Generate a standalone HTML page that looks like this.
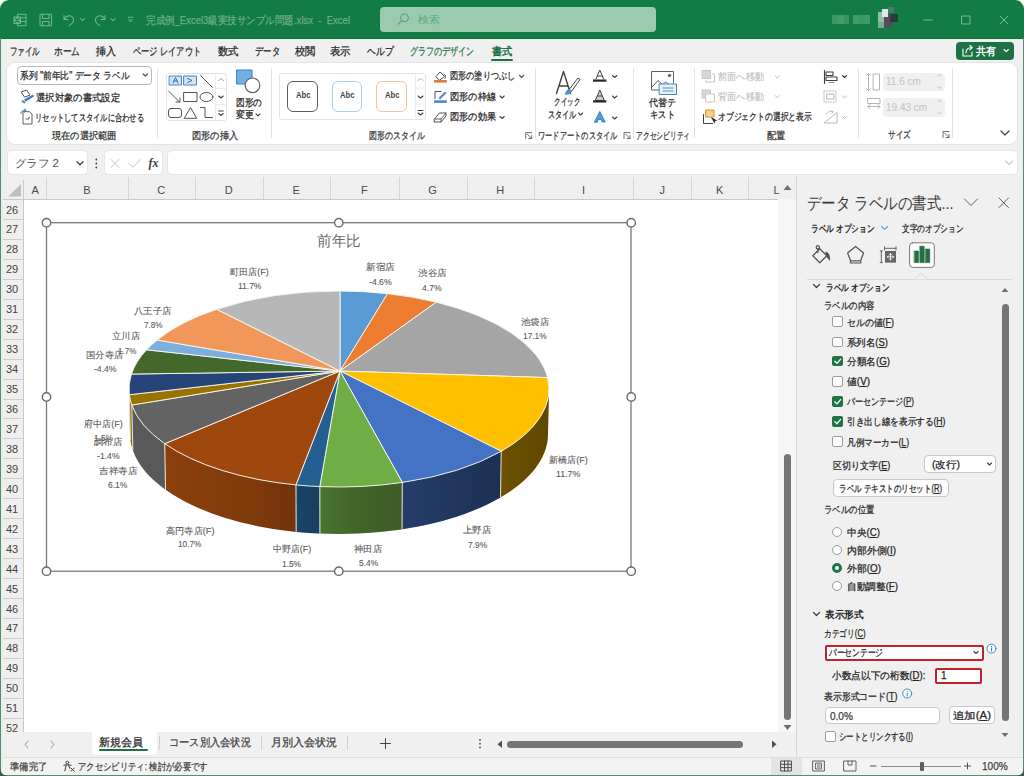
<!DOCTYPE html>
<html><head><meta charset="utf-8"><style>
html,body{margin:0;padding:0;}
body{width:1024px;height:776px;overflow:hidden;position:relative;background:#f0f0f0;font-family:"Liberation Sans",sans-serif;}
.t{position:absolute;white-space:nowrap;transform-origin:0 50%;-webkit-text-stroke:0.25px currentColor;}
.b{position:absolute;box-sizing:border-box;}
svg.ov{position:absolute;left:0;top:0;}
</style></head><body>
<div class="b" style="left:0px;top:0px;width:1024px;height:38px;background:#137c44;"></div>
<svg class="ov" width="1024" height="776" style="z-index:50;pointer-events:none"><path d="M0 0 H9 A9 9 0 0 0 0 9 Z" fill="#ffffff"/><path d="M1024 0 H1015 A9 9 0 0 1 1024 9 Z" fill="#ffffff"/><path d="M0 776 V768 A8 8 0 0 0 8 776 Z" fill="#3a5a48"/><path d="M1024 776 V768 A8 8 0 0 1 1016 776 Z" fill="#3a5a48"/></svg>
<div class="b" style="left:0px;top:37.5px;width:1024px;height:1px;background:#0f6c3b;"></div>
<div class="b" style="left:0px;top:38.5px;width:1024px;height:1.5px;background:#e3f3e8;"></div>
<div class="b" style="left:0px;top:38px;width:1px;height:738px;background:#5a8a70;"></div>
<div class="b" style="left:1px;top:40px;width:1.5px;height:735px;background:#e3f1e8;z-index:40;"></div>
<div class="b" style="left:1020.5px;top:62px;width:2.5px;height:695px;background:#e9f3ed;"></div>
<div class="b" style="left:1023px;top:38px;width:1px;height:738px;background:#5a8a70;"></div>
<div class="b" style="left:0px;top:775px;width:1024px;height:1px;background:#5a8a70;"></div>
<div class="t fit" style="transform:scaleX(0.8647);left:146px;top:13.93px;font-size:11px;line-height:13.75px;--w:204px;color:#6cae86;font-weight:400;-webkit-text-stroke:0.25px;">完成例_Excel3級実技サンプル問題.xlsx&nbsp;&nbsp;-&nbsp;&nbsp;Excel</div>
<div class="b" style="left:380px;top:7px;width:276px;height:25px;background:#9ccaae;border-radius:4px;"></div>
<div class="t fit" style="transform:scaleX(1.075);left:418px;top:14.05px;font-size:10px;line-height:12.5px;--w:21.5px;color:#5aa97b;font-weight:400;-webkit-text-stroke:0px;">検索</div>
<div class="t fit" style="transform:scaleX(0.6818);left:10px;top:45.42px;font-size:11px;line-height:13.75px;--w:30px;color:#262626;font-weight:400;-webkit-text-stroke:0.25px;">ファイル</div>
<div class="t fit" style="transform:scaleX(0.7879);left:54px;top:45.42px;font-size:11px;line-height:13.75px;--w:26px;color:#262626;font-weight:400;-webkit-text-stroke:0.25px;">ホーム</div>
<div class="t fit" style="transform:scaleX(0.9091);left:96px;top:45.42px;font-size:11px;line-height:13.75px;--w:20px;color:#262626;font-weight:400;-webkit-text-stroke:0.25px;">挿入</div>
<div class="t fit" style="transform:scaleX(0.7467);left:133px;top:45.42px;font-size:11px;line-height:13.75px;--w:68px;color:#262626;font-weight:400;-webkit-text-stroke:0.25px;">ページ レイアウト</div>
<div class="t fit" style="transform:scaleX(0.9545);left:218px;top:45.42px;font-size:11px;line-height:13.75px;--w:21px;color:#262626;font-weight:400;-webkit-text-stroke:0.25px;">数式</div>
<div class="t fit" style="transform:scaleX(0.7576);left:254.5px;top:45.42px;font-size:11px;line-height:13.75px;--w:25.0px;color:#262626;font-weight:400;-webkit-text-stroke:0.25px;">データ</div>
<div class="t fit" style="transform:scaleX(0.9318);left:295px;top:45.42px;font-size:11px;line-height:13.75px;--w:20.5px;color:#262626;font-weight:400;-webkit-text-stroke:0.25px;">校閲</div>
<div class="t fit" style="transform:scaleX(0.9545);left:330px;top:45.42px;font-size:11px;line-height:13.75px;--w:21px;color:#262626;font-weight:400;-webkit-text-stroke:0.25px;">表示</div>
<div class="t fit" style="transform:scaleX(0.803);left:366.5px;top:45.42px;font-size:11px;line-height:13.75px;--w:26.5px;color:#262626;font-weight:400;-webkit-text-stroke:0.25px;">ヘルプ</div>
<div class="t fit" style="transform:scaleX(0.733);left:410px;top:45.42px;font-size:11px;line-height:13.75px;--w:64.5px;color:#1e7145;font-weight:400;-webkit-text-stroke:0.25px;">グラフのデザイン</div>
<div class="t fit" style="transform:scaleX(0.9318);left:491.5px;top:45.42px;font-size:11px;line-height:13.75px;--w:20.5px;color:#1e7145;font-weight:700;-webkit-text-stroke:0px;">書式</div>
<div class="b" style="left:491px;top:58.5px;width:22px;height:2.5px;background:#1e7145;border-radius:1px;"></div>
<div class="b" style="left:955.5px;top:41.5px;width:58.5px;height:18.5px;background:#1e7145;border-radius:4px;"></div>
<div class="t fit" style="transform:scaleX(0.9091);left:975.5px;top:44.74px;font-size:10.5px;line-height:13.12px;--w:20.0px;color:#ffffff;font-weight:700;-webkit-text-stroke:0px;">共有</div>
<div class="b" style="left:7px;top:62.5px;width:1010px;height:81px;background:#ffffff;border-radius:8px;box-shadow:0 0 0 1px #e3e3e3;"></div>
<div class="b" style="left:156.5px;top:68px;width:1px;height:70px;background:#e1e1e1;"></div>
<div class="b" style="left:270.5px;top:68px;width:1px;height:70px;background:#e1e1e1;"></div>
<div class="b" style="left:534.5px;top:68px;width:1px;height:70px;background:#e1e1e1;"></div>
<div class="b" style="left:633px;top:68px;width:1px;height:70px;background:#e1e1e1;"></div>
<div class="b" style="left:693.5px;top:68px;width:1px;height:70px;background:#e1e1e1;"></div>
<div class="b" style="left:857.5px;top:68px;width:1px;height:70px;background:#e1e1e1;"></div>
<div class="b" style="left:951.5px;top:68px;width:1px;height:70px;background:#e1e1e1;"></div>
<div class="b" style="left:17px;top:66px;width:134.5px;height:18.5px;border:1px solid #b8b8b8;border-radius:4px;background:#fff;"></div>
<div class="t fit" style="transform:scaleX(0.8729);left:19.5px;top:69.55px;font-size:10px;line-height:12.5px;--w:109.5px;color:#262626;font-weight:400;-webkit-text-stroke:0.25px;">系列 "前年比" データ ラベル</div>
<div class="t fit" style="transform:scaleX(0.9333);left:36px;top:91.55px;font-size:10px;line-height:12.5px;--w:84px;color:#262626;font-weight:400;-webkit-text-stroke:0.25px;">選択対象の書式設定</div>
<div class="t fit" style="transform:scaleX(0.7267);left:35px;top:111.85px;font-size:10px;line-height:12.5px;--w:109px;color:#262626;font-weight:400;-webkit-text-stroke:0.25px;">リセットしてスタイルに合わせる</div>
<div class="t fit" style="transform:scaleX(0.9214);left:51.5px;top:129.85px;font-size:10px;line-height:12.5px;--w:64.5px;color:#333333;font-weight:400;-webkit-text-stroke:0.25px;">現在の選択範囲</div>
<div class="b" style="left:165.5px;top:72.5px;width:61px;height:48.5px;border:1px solid #e3e3e3;border-radius:3px;background:#fff;"></div>
<div class="b" style="left:215px;top:72.5px;width:1px;height:48.5px;background:#ececec;"></div>
<div class="t fit" style="transform:scaleX(0.8667);left:236px;top:97.05px;font-size:10px;line-height:12.5px;--w:26px;color:#262626;font-weight:400;-webkit-text-stroke:0.25px;">図形の</div>
<div class="t fit" style="transform:scaleX(0.9);left:236px;top:108.75px;font-size:10px;line-height:12.5px;--w:18px;color:#262626;font-weight:400;-webkit-text-stroke:0.25px;">変更</div>
<div class="t fit" style="transform:scaleX(0.92);left:191.5px;top:130.05px;font-size:10px;line-height:12.5px;--w:46.0px;color:#333333;font-weight:400;-webkit-text-stroke:0.25px;">図形の挿入</div>
<div class="b" style="left:278.5px;top:72.5px;width:147.5px;height:47.5px;border:1px solid #e3e3e3;border-radius:3px;background:#fff;"></div>
<div class="b" style="left:415px;top:72.5px;width:1px;height:47.5px;background:#ececec;"></div>
<div class="b" style="left:287px;top:81px;width:30.5px;height:30.5px;border:1.7px solid #5e5e5e;border-radius:6px;background:#fff;"></div>
<div class="b" style="left:331.5px;top:81px;width:30.5px;height:30.5px;border:1.3px solid #acd0ea;border-radius:6px;background:#fff;"></div>
<div class="b" style="left:376px;top:81px;width:30.5px;height:30.5px;border:1.3px solid #f0c29e;border-radius:6px;background:#fff;"></div>
<div class="t fit" style="transform:scaleX(0.8522);left:295.5px;top:90.27px;font-size:9px;line-height:11.25px;--w:14.5px;color:#454545;font-weight:700;-webkit-text-stroke:0px;">Abc</div>
<div class="t fit" style="transform:scaleX(0.8522);left:340.0px;top:90.27px;font-size:9px;line-height:11.25px;--w:14.5px;color:#454545;font-weight:700;-webkit-text-stroke:0px;">Abc</div>
<div class="t fit" style="transform:scaleX(0.8522);left:384.5px;top:90.27px;font-size:9px;line-height:11.25px;--w:14.5px;color:#454545;font-weight:700;-webkit-text-stroke:0px;">Abc</div>
<div class="t fit" style="transform:scaleX(0.8125);left:450px;top:70.45px;font-size:10px;line-height:12.5px;--w:65px;color:#262626;font-weight:400;-webkit-text-stroke:0.25px;">図形の塗りつぶし</div>
<div class="t fit" style="transform:scaleX(0.92);left:450px;top:91.05px;font-size:10px;line-height:12.5px;--w:46px;color:#262626;font-weight:400;-webkit-text-stroke:0.25px;">図形の枠線</div>
<div class="t fit" style="transform:scaleX(0.92);left:450px;top:111.45px;font-size:10px;line-height:12.5px;--w:46px;color:#262626;font-weight:400;-webkit-text-stroke:0.25px;">図形の効果</div>
<div class="t fit" style="transform:scaleX(0.7929);left:368.5px;top:129.85px;font-size:10px;line-height:12.5px;--w:55.5px;color:#333333;font-weight:400;-webkit-text-stroke:0.25px;">図形のスタイル</div>
<div class="t fit" style="transform:scaleX(0.65);left:554px;top:96.45px;font-size:10px;line-height:12.5px;--w:26px;color:#262626;font-weight:400;-webkit-text-stroke:0.25px;">クイック</div>
<div class="t fit" style="transform:scaleX(0.7125);left:547.5px;top:108.85px;font-size:10px;line-height:12.5px;--w:28.5px;color:#262626;font-weight:400;-webkit-text-stroke:0.25px;">スタイル</div>
<div class="t fit" style="transform:scaleX(0.7227);left:537.5px;top:129.65px;font-size:10px;line-height:12.5px;--w:79.5px;color:#333333;font-weight:400;-webkit-text-stroke:0.25px;">ワードアートのスタイル</div>
<div class="t fit" style="transform:scaleX(0.9);left:649px;top:96.95px;font-size:10px;line-height:12.5px;--w:27px;color:#262626;font-weight:400;-webkit-text-stroke:0.25px;">代替テ</div>
<div class="t fit" style="transform:scaleX(0.8333);left:650px;top:108.85px;font-size:10px;line-height:12.5px;--w:25px;color:#262626;font-weight:400;-webkit-text-stroke:0.25px;">キスト</div>
<div class="t fit" style="transform:scaleX(0.675);left:635.5px;top:129.65px;font-size:10px;line-height:12.5px;--w:54.0px;color:#333333;font-weight:400;-webkit-text-stroke:0.25px;">アクセシビリティ</div>
<div class="t fit" style="transform:scaleX(0.92);left:718px;top:70.65px;font-size:10px;line-height:12.5px;--w:46px;color:#bdbdbd;font-weight:400;-webkit-text-stroke:0.1px;">前面へ移動</div>
<div class="t fit" style="transform:scaleX(0.92);left:718px;top:90.55px;font-size:10px;line-height:12.5px;--w:46px;color:#bdbdbd;font-weight:400;-webkit-text-stroke:0.1px;">背面へ移動</div>
<div class="t fit" style="transform:scaleX(0.7833);left:718px;top:111.35px;font-size:10px;line-height:12.5px;--w:94px;color:#262626;font-weight:400;-webkit-text-stroke:0.25px;">オブジェクトの選択と表示</div>
<div class="t fit" style="transform:scaleX(0.925);left:767px;top:129.65px;font-size:10px;line-height:12.5px;--w:18.5px;color:#333333;font-weight:400;-webkit-text-stroke:0.25px;">配置</div>
<div class="b" style="left:883px;top:72.5px;width:62px;height:18.7px;background:#f0f0f0;border-radius:4px;"></div>
<div class="b" style="left:883px;top:98px;width:62px;height:18.7px;background:#f0f0f0;border-radius:4px;"></div>
<div class="t" style="left:886px;top:76.05px;font-size:10px;line-height:12.5px;--w:36px;color:#c4c4c4;font-weight:400;-webkit-text-stroke:0px;">11.6 cm</div>
<div class="t" style="left:886px;top:101.55px;font-size:10px;line-height:12.5px;--w:42px;color:#c4c4c4;font-weight:400;-webkit-text-stroke:0px;">19.43 cm</div>
<div class="t fit" style="transform:scaleX(0.75);left:887.5px;top:128.55px;font-size:10px;line-height:12.5px;--w:22.5px;color:#333333;font-weight:400;-webkit-text-stroke:0.25px;">サイズ</div>
<div class="b" style="left:7.8px;top:150.7px;width:79.7px;height:23.5px;background:#fff;border-radius:4px;box-shadow:0 0 0 1px #e6e6e6;"></div>
<div class="t fit" style="transform:scaleX(1.043);left:14.5px;top:157.23px;font-size:11px;line-height:13.75px;--w:44.0px;color:#505050;font-weight:400;-webkit-text-stroke:0px;">グラフ 2</div>
<div class="b" style="left:105px;top:150.7px;width:57px;height:23.5px;background:#fff;border-radius:4px;box-shadow:0 0 0 1px #e6e6e6;"></div>
<div class="b" style="left:167.5px;top:150.7px;width:849px;height:23.5px;background:#fff;border-radius:4px;box-shadow:0 0 0 1px #e6e6e6;"></div>
<div class="t" style="left:148.5px;top:155.8px;font-size:12px;line-height:15.0px;--w:10.0px;color:#404040;font-weight:700;-webkit-text-stroke:0px;font-family:Liberation Serif,serif;font-style:italic;">fx</div>
<div class="b" style="left:1px;top:180px;width:795px;height:19px;background:#efefef;"></div>
<div class="b" style="left:1px;top:199px;width:23px;height:533px;background:#efefef;"></div>
<div class="b" style="left:24px;top:199px;width:754px;height:533px;background:#ffffff;"></div>
<div class="b" style="left:1px;top:198.5px;width:777px;height:1px;background:#c8c8c8;"></div>
<div class="b" style="left:23.2px;top:180px;width:1px;height:552px;background:#c8c8c8;"></div>
<div class="b" style="left:46.4px;top:177px;width:1px;height:22px;background:#d5d5d5;"></div>
<div class="t" style="left:25.200000000000003px;width:20px;text-align:center;top:182px;line-height:17px;font-size:11px;color:#4a4a4a;-webkit-text-stroke:0">A</div>
<div class="b" style="left:127.5px;top:177px;width:1px;height:22px;background:#d5d5d5;"></div>
<div class="t" style="left:76.95px;width:20px;text-align:center;top:182px;line-height:17px;font-size:11px;color:#4a4a4a;-webkit-text-stroke:0">B</div>
<div class="b" style="left:195px;top:177px;width:1px;height:22px;background:#d5d5d5;"></div>
<div class="t" style="left:151.25px;width:20px;text-align:center;top:182px;line-height:17px;font-size:11px;color:#4a4a4a;-webkit-text-stroke:0">C</div>
<div class="b" style="left:262.5px;top:177px;width:1px;height:22px;background:#d5d5d5;"></div>
<div class="t" style="left:218.75px;width:20px;text-align:center;top:182px;line-height:17px;font-size:11px;color:#4a4a4a;-webkit-text-stroke:0">D</div>
<div class="b" style="left:330px;top:177px;width:1px;height:22px;background:#d5d5d5;"></div>
<div class="t" style="left:286.25px;width:20px;text-align:center;top:182px;line-height:17px;font-size:11px;color:#4a4a4a;-webkit-text-stroke:0">E</div>
<div class="b" style="left:398.5px;top:177px;width:1px;height:22px;background:#d5d5d5;"></div>
<div class="t" style="left:354.25px;width:20px;text-align:center;top:182px;line-height:17px;font-size:11px;color:#4a4a4a;-webkit-text-stroke:0">F</div>
<div class="b" style="left:466.6px;top:177px;width:1px;height:22px;background:#d5d5d5;"></div>
<div class="t" style="left:422.55px;width:20px;text-align:center;top:182px;line-height:17px;font-size:11px;color:#4a4a4a;-webkit-text-stroke:0">G</div>
<div class="b" style="left:533.7px;top:177px;width:1px;height:22px;background:#d5d5d5;"></div>
<div class="t" style="left:490.15000000000003px;width:20px;text-align:center;top:182px;line-height:17px;font-size:11px;color:#4a4a4a;-webkit-text-stroke:0">H</div>
<div class="b" style="left:633.4px;top:177px;width:1px;height:22px;background:#d5d5d5;"></div>
<div class="t" style="left:573.55px;width:20px;text-align:center;top:182px;line-height:17px;font-size:11px;color:#4a4a4a;-webkit-text-stroke:0">I</div>
<div class="b" style="left:691px;top:177px;width:1px;height:22px;background:#d5d5d5;"></div>
<div class="t" style="left:652.2px;width:20px;text-align:center;top:182px;line-height:17px;font-size:11px;color:#4a4a4a;-webkit-text-stroke:0">J</div>
<div class="b" style="left:748.4px;top:177px;width:1px;height:22px;background:#d5d5d5;"></div>
<div class="t" style="left:709.7px;width:20px;text-align:center;top:182px;line-height:17px;font-size:11px;color:#4a4a4a;-webkit-text-stroke:0">K</div>
<div class="b" style="left:805px;top:177px;width:1px;height:22px;background:#d5d5d5;"></div>
<div class="t" style="left:766.5px;width:20px;text-align:center;top:182px;line-height:17px;font-size:11px;color:#4a4a4a;-webkit-text-stroke:0">L</div>
<div class="b" style="left:1px;top:218.95px;width:23px;height:1px;background:#cdcdcd;"></div>
<div class="t" style="left:1px;width:22px;text-align:center;top:200.50px;line-height:18px;font-size:11px;color:#444444;-webkit-text-stroke:0">26</div>
<div class="b" style="left:1px;top:238.89999999999998px;width:23px;height:1px;background:#cdcdcd;"></div>
<div class="t" style="left:1px;width:22px;text-align:center;top:220.45px;line-height:18px;font-size:11px;color:#444444;-webkit-text-stroke:0">27</div>
<div class="b" style="left:1px;top:258.85px;width:23px;height:1px;background:#cdcdcd;"></div>
<div class="t" style="left:1px;width:22px;text-align:center;top:240.40px;line-height:18px;font-size:11px;color:#444444;-webkit-text-stroke:0">28</div>
<div class="b" style="left:1px;top:278.8px;width:23px;height:1px;background:#cdcdcd;"></div>
<div class="t" style="left:1px;width:22px;text-align:center;top:260.35px;line-height:18px;font-size:11px;color:#444444;-webkit-text-stroke:0">29</div>
<div class="b" style="left:1px;top:298.75px;width:23px;height:1px;background:#cdcdcd;"></div>
<div class="t" style="left:1px;width:22px;text-align:center;top:280.30px;line-height:18px;font-size:11px;color:#444444;-webkit-text-stroke:0">30</div>
<div class="b" style="left:1px;top:318.7px;width:23px;height:1px;background:#cdcdcd;"></div>
<div class="t" style="left:1px;width:22px;text-align:center;top:300.25px;line-height:18px;font-size:11px;color:#444444;-webkit-text-stroke:0">31</div>
<div class="b" style="left:1px;top:338.65px;width:23px;height:1px;background:#cdcdcd;"></div>
<div class="t" style="left:1px;width:22px;text-align:center;top:320.20px;line-height:18px;font-size:11px;color:#444444;-webkit-text-stroke:0">32</div>
<div class="b" style="left:1px;top:358.59999999999997px;width:23px;height:1px;background:#cdcdcd;"></div>
<div class="t" style="left:1px;width:22px;text-align:center;top:340.15px;line-height:18px;font-size:11px;color:#444444;-webkit-text-stroke:0">33</div>
<div class="b" style="left:1px;top:378.55px;width:23px;height:1px;background:#cdcdcd;"></div>
<div class="t" style="left:1px;width:22px;text-align:center;top:360.10px;line-height:18px;font-size:11px;color:#444444;-webkit-text-stroke:0">34</div>
<div class="b" style="left:1px;top:398.49999999999994px;width:23px;height:1px;background:#cdcdcd;"></div>
<div class="t" style="left:1px;width:22px;text-align:center;top:380.05px;line-height:18px;font-size:11px;color:#444444;-webkit-text-stroke:0">35</div>
<div class="b" style="left:1px;top:418.45px;width:23px;height:1px;background:#cdcdcd;"></div>
<div class="t" style="left:1px;width:22px;text-align:center;top:400.00px;line-height:18px;font-size:11px;color:#444444;-webkit-text-stroke:0">36</div>
<div class="b" style="left:1px;top:438.4px;width:23px;height:1px;background:#cdcdcd;"></div>
<div class="t" style="left:1px;width:22px;text-align:center;top:419.95px;line-height:18px;font-size:11px;color:#444444;-webkit-text-stroke:0">37</div>
<div class="b" style="left:1px;top:458.34999999999997px;width:23px;height:1px;background:#cdcdcd;"></div>
<div class="t" style="left:1px;width:22px;text-align:center;top:439.90px;line-height:18px;font-size:11px;color:#444444;-webkit-text-stroke:0">38</div>
<div class="b" style="left:1px;top:478.29999999999995px;width:23px;height:1px;background:#cdcdcd;"></div>
<div class="t" style="left:1px;width:22px;text-align:center;top:459.85px;line-height:18px;font-size:11px;color:#444444;-webkit-text-stroke:0">39</div>
<div class="b" style="left:1px;top:498.25px;width:23px;height:1px;background:#cdcdcd;"></div>
<div class="t" style="left:1px;width:22px;text-align:center;top:479.80px;line-height:18px;font-size:11px;color:#444444;-webkit-text-stroke:0">40</div>
<div class="b" style="left:1px;top:518.2px;width:23px;height:1px;background:#cdcdcd;"></div>
<div class="t" style="left:1px;width:22px;text-align:center;top:499.75px;line-height:18px;font-size:11px;color:#444444;-webkit-text-stroke:0">41</div>
<div class="b" style="left:1px;top:538.1500000000001px;width:23px;height:1px;background:#cdcdcd;"></div>
<div class="t" style="left:1px;width:22px;text-align:center;top:519.70px;line-height:18px;font-size:11px;color:#444444;-webkit-text-stroke:0">42</div>
<div class="b" style="left:1px;top:558.1px;width:23px;height:1px;background:#cdcdcd;"></div>
<div class="t" style="left:1px;width:22px;text-align:center;top:539.65px;line-height:18px;font-size:11px;color:#444444;-webkit-text-stroke:0">43</div>
<div class="b" style="left:1px;top:578.05px;width:23px;height:1px;background:#cdcdcd;"></div>
<div class="t" style="left:1px;width:22px;text-align:center;top:559.60px;line-height:18px;font-size:11px;color:#444444;-webkit-text-stroke:0">44</div>
<div class="b" style="left:1px;top:598.0px;width:23px;height:1px;background:#cdcdcd;"></div>
<div class="t" style="left:1px;width:22px;text-align:center;top:579.55px;line-height:18px;font-size:11px;color:#444444;-webkit-text-stroke:0">45</div>
<div class="b" style="left:1px;top:617.95px;width:23px;height:1px;background:#cdcdcd;"></div>
<div class="t" style="left:1px;width:22px;text-align:center;top:599.50px;line-height:18px;font-size:11px;color:#444444;-webkit-text-stroke:0">46</div>
<div class="b" style="left:1px;top:637.9000000000001px;width:23px;height:1px;background:#cdcdcd;"></div>
<div class="t" style="left:1px;width:22px;text-align:center;top:619.45px;line-height:18px;font-size:11px;color:#444444;-webkit-text-stroke:0">47</div>
<div class="b" style="left:1px;top:657.85px;width:23px;height:1px;background:#cdcdcd;"></div>
<div class="t" style="left:1px;width:22px;text-align:center;top:639.40px;line-height:18px;font-size:11px;color:#444444;-webkit-text-stroke:0">48</div>
<div class="b" style="left:1px;top:677.8px;width:23px;height:1px;background:#cdcdcd;"></div>
<div class="t" style="left:1px;width:22px;text-align:center;top:659.35px;line-height:18px;font-size:11px;color:#444444;-webkit-text-stroke:0">49</div>
<div class="b" style="left:1px;top:697.75px;width:23px;height:1px;background:#cdcdcd;"></div>
<div class="t" style="left:1px;width:22px;text-align:center;top:679.30px;line-height:18px;font-size:11px;color:#444444;-webkit-text-stroke:0">50</div>
<div class="b" style="left:1px;top:717.7px;width:23px;height:1px;background:#cdcdcd;"></div>
<div class="t" style="left:1px;width:22px;text-align:center;top:699.25px;line-height:18px;font-size:11px;color:#444444;-webkit-text-stroke:0">51</div>
<div class="b" style="left:1px;top:737.65px;width:23px;height:1px;background:#cdcdcd;"></div>
<div class="t" style="left:1px;width:22px;text-align:center;top:719.20px;line-height:18px;font-size:11px;color:#444444;-webkit-text-stroke:0">52</div>
<svg class="ov" width="1024" height="776"><path d="M21 184 V196.6 H8.2 Z" fill="#bfbfbf"/></svg>
<div class="b" style="left:778px;top:199px;width:18px;height:533px;background:#f6f6f6;"></div>
<div class="b" style="left:784px;top:453.5px;width:7px;height:266px;background:#757575;border-radius:4px;"></div>
<svg class="ov" width="1024" height="776"><path d="M783.5 190 L787.5 185 L791.5 190 Z" fill="#6e6e6e"/><path d="M783.5 725 L787.5 730 L791.5 725 Z" fill="#6e6e6e"/></svg>
<div class="b" style="left:1px;top:732px;width:795px;height:25px;background:#f0f0f0;"></div>
<div class="b" style="left:91.5px;top:732px;width:65px;height:23px;background:#ffffff;border-radius:0 0 4px 4px;"></div>
<div class="t fit" style="transform:scaleX(1.0114);left:99.2px;top:735.72px;font-size:11px;line-height:13.75px;--w:44.5px;color:#262626;font-weight:400;-webkit-text-stroke:0.25px;">新規会員</div>
<div class="b" style="left:99px;top:749px;width:49px;height:2px;background:#1e7145;border-radius:1px;"></div>
<div class="b" style="left:159px;top:736px;width:1px;height:14px;background:#d0d0d0;"></div>
<div class="t fit" style="transform:scaleX(0.9318);left:169px;top:735.72px;font-size:11px;line-height:13.75px;--w:82px;color:#404040;font-weight:400;-webkit-text-stroke:0.25px;">コース別入会状況</div>
<div class="b" style="left:261px;top:736px;width:1px;height:14px;background:#d0d0d0;"></div>
<div class="t fit" style="transform:scaleX(1.0061);left:271px;top:735.72px;font-size:11px;line-height:13.75px;--w:66.4px;color:#404040;font-weight:400;-webkit-text-stroke:0.25px;">月別入会状況</div>
<div class="b" style="left:347.4px;top:736px;width:1px;height:14px;background:#d0d0d0;"></div>
<div class="b" style="left:506.8px;top:740.8px;width:236.7px;height:7px;background:#757575;border-radius:4px;"></div>
<div class="b" style="left:1px;top:757px;width:1022px;height:18px;background:#f3f3f3;"></div>
<div class="b" style="left:1px;top:757px;width:1022px;height:1px;background:#dedede;"></div>
<div class="t fit" style="transform:scaleX(0.925);left:10px;top:760.65px;font-size:10px;line-height:12.5px;--w:37px;color:#404040;font-weight:400;-webkit-text-stroke:0.25px;">準備完了</div>
<div class="t fit" style="transform:scaleX(0.8344);left:78px;top:760.55px;font-size:10px;line-height:12.5px;--w:129.8px;color:#404040;font-weight:400;-webkit-text-stroke:0.25px;">アクセシビリティ: 検討が必要です</div>
<div class="b" style="left:770.8px;top:758px;width:31px;height:17px;background:#e3e3e3;"></div>
<div class="t fit" style="transform:scaleX(0.9168);left:981.6px;top:759.62px;font-size:11px;line-height:13.75px;--w:25.8px;color:#404040;font-weight:400;-webkit-text-stroke:0.25px;">100%</div>
<div class="b" style="left:881px;top:765.8px;width:79.5px;height:1px;background:#8a8a8a;"></div>
<div class="b" style="left:920px;top:762px;width:3.5px;height:8.5px;background:#5f5f5f;border-radius:1px;"></div>
<div class="b" style="left:796px;top:176px;width:224.5px;height:581px;background:#f0f0f0;"></div>
<div class="b" style="left:796px;top:176px;width:1px;height:581px;background:#d6d6d6;"></div>
<div class="t fit" style="transform:scaleX(0.8522);left:807px;top:193.28px;font-size:17px;line-height:21.25px;--w:146.5px;color:#3a3a3a;font-weight:400;-webkit-text-stroke:0px;">データ ラベルの書式...</div>
<div class="t fit" style="transform:scaleX(0.7635);left:811px;top:222.75px;font-size:10px;line-height:12.5px;--w:63.2px;color:#262626;font-weight:700;-webkit-text-stroke:0px;">ラベル オプション</div>
<div class="t fit" style="transform:scaleX(0.7688);left:902px;top:222.75px;font-size:10px;line-height:12.5px;--w:61.5px;color:#262626;font-weight:400;-webkit-text-stroke:0.25px;">文字のオプション</div>
<div class="b" style="left:807px;top:279px;width:205px;height:1px;background:#d9d9d9;"></div>
<div class="t fit" style="transform:scaleX(0.7635);left:825.8px;top:281.55px;font-size:10px;line-height:12.5px;--w:63.2px;color:#262626;font-weight:700;-webkit-text-stroke:0px;">ラベル オプション</div>
<div class="t fit" style="transform:scaleX(0.84);left:824px;top:299.75px;font-size:10px;line-height:12.5px;--w:50.4px;color:#262626;font-weight:400;-webkit-text-stroke:0.25px;">ラベルの内容</div>
<div class="b" style="left:832.4px;top:316.4px;width:10.6px;height:10.6px;background:#fff;border:1px solid #9c9c9c;border-radius:2px;"></div>
<div class="t fit" style="transform:scaleX(0.8902);left:847px;top:316.55px;font-size:10px;line-height:12.5px;--w:47px;color:#262626;font-weight:400;-webkit-text-stroke:0.25px;">セルの値(<u>F</u>)</div>
<div class="b" style="left:832.4px;top:336.59999999999997px;width:10.6px;height:10.6px;background:#fff;border:1px solid #9c9c9c;border-radius:2px;"></div>
<div class="t fit" style="transform:scaleX(0.9456);left:847px;top:336.75px;font-size:10px;line-height:12.5px;--w:41px;color:#262626;font-weight:400;-webkit-text-stroke:0.25px;">系列名(<u>S</u>)</div>
<div class="b" style="left:832.4px;top:355.8px;width:10.6px;height:10.6px;background:#217346;border-radius:2px;"></div>
<div class="t fit" style="transform:scaleX(0.967);left:847px;top:355.95px;font-size:10px;line-height:12.5px;--w:43px;color:#262626;font-weight:400;-webkit-text-stroke:0.25px;">分類名(<u>G</u>)</div>
<div class="b" style="left:832.4px;top:376.2px;width:10.6px;height:10.6px;background:#fff;border:1px solid #9c9c9c;border-radius:2px;"></div>
<div class="t fit" style="transform:scaleX(0.9846);left:847px;top:376.35px;font-size:10px;line-height:12.5px;--w:23px;color:#262626;font-weight:400;-webkit-text-stroke:0.25px;">値(<u>V</u>)</div>
<div class="b" style="left:832.4px;top:396.3px;width:10.6px;height:10.6px;background:#217346;border-radius:2px;"></div>
<div class="t fit" style="transform:scaleX(0.8037);left:847px;top:396.45px;font-size:10px;line-height:12.5px;--w:67px;color:#262626;font-weight:400;-webkit-text-stroke:0.25px;">パーセンテージ(<u>P</u>)</div>
<div class="b" style="left:832.4px;top:416.09999999999997px;width:10.6px;height:10.6px;background:#217346;border-radius:2px;"></div>
<div class="t fit" style="transform:scaleX(0.8646);left:847px;top:416.25px;font-size:10px;line-height:12.5px;--w:98.5px;color:#262626;font-weight:400;-webkit-text-stroke:0.25px;">引き出し線を表示する(<u>H</u>)</div>
<div class="b" style="left:832.4px;top:436.4px;width:10.6px;height:10.6px;background:#fff;border:1px solid #9c9c9c;border-radius:2px;"></div>
<div class="t fit" style="transform:scaleX(0.8581);left:847px;top:436.55px;font-size:10px;line-height:12.5px;--w:62px;color:#262626;font-weight:400;-webkit-text-stroke:0.25px;">凡例マーカー(<u>L</u>)</div>
<div class="t fit" style="transform:scaleX(0.9028);left:832.8px;top:459.55px;font-size:10px;line-height:12.5px;--w:57.2px;color:#262626;font-weight:400;-webkit-text-stroke:0.25px;">区切り文字(<u>E</u>)</div>
<div class="b" style="left:923.6px;top:455px;width:72px;height:17.5px;background:#fff;border:1px solid #c8c8c8;border-radius:4px;"></div>
<div class="t fit" style="transform:scaleX(1.0498);left:932px;top:458.55px;font-size:10px;line-height:12.5px;--w:28px;color:#262626;font-weight:400;-webkit-text-stroke:0.25px;">(改行)</div>
<div class="b" style="left:832.8px;top:479px;width:116px;height:17.5px;background:#fdfdfd;border:1px solid #c8c8c8;border-radius:4px;"></div>
<div class="t fit" style="transform:scaleX(0.7535);left:839px;top:482.55px;font-size:10px;line-height:12.5px;--w:103px;color:#262626;font-weight:400;-webkit-text-stroke:0.25px;">ラベル テキストのリセット(<u>R</u>)</div>
<div class="t fit" style="transform:scaleX(0.84);left:824px;top:503.75px;font-size:10px;line-height:12.5px;--w:50.4px;color:#262626;font-weight:400;-webkit-text-stroke:0.25px;">ラベルの位置</div>
<div class="b" style="left:832.4px;top:527px;width:10px;height:10px;background:#fff;border:1px solid #9a9a9a;border-radius:50%;"></div>
<div class="t fit" style="transform:scaleX(0.9728);left:847px;top:526.85px;font-size:10px;line-height:12.5px;--w:33px;color:#262626;font-weight:400;-webkit-text-stroke:0.25px;">中央(<u>C</u>)</div>
<div class="b" style="left:832.4px;top:545px;width:10px;height:10px;background:#fff;border:1px solid #9a9a9a;border-radius:50%;"></div>
<div class="t fit" style="transform:scaleX(0.9905);left:847px;top:544.85px;font-size:10px;line-height:12.5px;--w:49px;color:#262626;font-weight:400;-webkit-text-stroke:0.25px;">内部外側(<u>I</u>)</div>
<div class="b" style="left:832.4px;top:563px;width:10px;height:10px;background:#fff;border:3px solid #217346;border-radius:50%;"></div>
<div class="t fit" style="transform:scaleX(0.9864);left:847px;top:562.85px;font-size:10px;line-height:12.5px;--w:34px;color:#262626;font-weight:400;-webkit-text-stroke:0.25px;">外部(<u>O</u>)</div>
<div class="b" style="left:832.4px;top:581.1px;width:10px;height:10px;background:#fff;border:1px solid #9a9a9a;border-radius:50%;"></div>
<div class="t fit" style="transform:scaleX(0.966);left:847px;top:580.95px;font-size:10px;line-height:12.5px;--w:51px;color:#262626;font-weight:400;-webkit-text-stroke:0.25px;">自動調整(<u>F</u>)</div>
<div class="t fit" style="transform:scaleX(0.9625);left:825px;top:609.45px;font-size:10px;line-height:12.5px;--w:38.5px;color:#262626;font-weight:700;-webkit-text-stroke:0px;">表示形式</div>
<div class="t fit" style="transform:scaleX(0.7715);left:824px;top:628.05px;font-size:10px;line-height:12.5px;--w:41.6px;color:#262626;font-weight:400;-webkit-text-stroke:0.25px;">カテゴリ(<u>C</u>)</div>
<div class="b" style="left:825.2px;top:644.8px;width:158.6px;height:16px;background:#fff;border:2px solid #c0212a;border-radius:2px;"></div>
<div class="t fit" style="transform:scaleX(0.7714);left:829px;top:647.35px;font-size:10px;line-height:12.5px;--w:54px;color:#262626;font-weight:400;-webkit-text-stroke:0.25px;">パーセンテージ</div>
<div class="t fit" style="transform:scaleX(0.966);left:832.4px;top:670.35px;font-size:10px;line-height:12.5px;--w:93.4px;color:#262626;font-weight:400;-webkit-text-stroke:0.25px;">小数点以下の桁数(<u>D</u>):</div>
<div class="b" style="left:934.6px;top:667.8px;width:47px;height:16.4px;background:#fff;border:2px solid #c0212a;border-radius:2px;"></div>
<div class="t" style="left:941px;top:670.35px;font-size:10px;line-height:12.5px;--w:5px;color:#262626;font-weight:400;-webkit-text-stroke:0.25px;">1</div>
<div class="t fit" style="transform:scaleX(0.8865);left:824px;top:691.15px;font-size:10px;line-height:12.5px;--w:73.4px;color:#262626;font-weight:400;-webkit-text-stroke:0.25px;">表示形式コード(<u>T</u>)</div>
<div class="b" style="left:825.2px;top:707.2px;width:114.8px;height:17.1px;background:#fff;border:1px solid #c8c8c8;border-radius:4px;"></div>
<div class="t" style="left:830px;top:710.65px;font-size:10px;line-height:12.5px;--w:23px;color:#404040;font-weight:400;-webkit-text-stroke:0.25px;">0.0%</div>
<div class="b" style="left:948.8px;top:706px;width:46.6px;height:18.3px;background:#fdfdfd;border:1px solid #c8c8c8;border-radius:4px;"></div>
<div class="t fit" style="transform:scaleX(1.1391);left:953px;top:710.05px;font-size:10px;line-height:12.5px;--w:38px;color:#262626;font-weight:400;-webkit-text-stroke:0.25px;">追加(<u>A</u>)</div>
<div class="b" style="left:825px;top:731px;width:10.5px;height:10.5px;background:#fff;border:1px solid #9c9c9c;border-radius:2px;"></div>
<div class="t fit" style="transform:scaleX(0.7429);left:839.4px;top:730.85px;font-size:10px;line-height:12.5px;--w:73.9px;color:#262626;font-weight:400;-webkit-text-stroke:0.25px;">シートとリンクする(<u>I</u>)</div>
<div class="b" style="left:806px;top:279.8px;width:195px;height:3.6px;background:#f0f0f0;"></div>
<div class="b" style="left:1002.4px;top:303.6px;width:6.6px;height:417px;background:#757575;border-radius:4px;"></div>
<svg class="ov" width="1024" height="776" style="z-index:5"><defs><linearGradient id="shd" gradientUnits="userSpaceOnUse" x1="129" y1="0" x2="549" y2="0"><stop offset="0" stop-color="#000" stop-opacity="0.08"/><stop offset="0.3" stop-color="#000" stop-opacity="0.2"/><stop offset="0.55" stop-color="#000" stop-opacity="0.42"/><stop offset="1" stop-color="#000" stop-opacity="0.63"/></linearGradient></defs><rect x="46.5" y="222.7" width="584.5" height="348.5" fill="#ffffff" stroke="#7a7a7a" stroke-width="1.3"/><path d="M549.00 389.00 A210.0 98.0 0 0 1 501.25 451.22 L500.48 497.49 A209.0 100.0 0 0 0 548.00 434.00 Z" fill="#FFC000"/><path d="M501.25 451.22 A210.0 98.0 0 0 1 402.32 482.44 L402.02 529.35 A209.0 100.0 0 0 0 500.48 497.49 Z" fill="#4472C4"/><path d="M402.32 482.44 A210.0 98.0 0 0 1 319.80 486.59 L319.89 533.58 A209.0 100.0 0 0 0 402.02 529.35 Z" fill="#70AD47"/><path d="M319.80 486.59 A210.0 98.0 0 0 1 295.97 484.92 L296.17 531.88 A209.0 100.0 0 0 0 319.89 533.58 Z" fill="#255E91"/><path d="M295.97 484.92 A210.0 98.0 0 0 1 164.73 443.68 L165.56 489.80 A209.0 100.0 0 0 0 296.17 531.88 Z" fill="#9E480E"/><path d="M164.73 443.68 A210.0 98.0 0 0 1 131.83 405.04 L132.82 450.37 A209.0 100.0 0 0 0 165.56 489.80 Z" fill="#636363"/><path d="M131.83 405.04 A210.0 98.0 0 0 1 129.36 394.73 L130.36 439.84 A209.0 100.0 0 0 0 132.82 450.37 Z" fill="#997300"/><path d="M129.36 394.73 A210.0 98.0 0 0 1 129.00 389.00 L130.00 434.00 A209.0 100.0 0 0 0 130.36 439.84 Z" fill="#264478"/><path d="M549.00 389.00 A210.0 98.0 0 0 1 129.00 389.00 L130.00 434.00 A209.0 100.0 0 0 0 548.00 434.00 Z" fill="url(#shd)"/><line x1="501.25" y1="451.22" x2="500.48" y2="497.49" stroke="#f4f0e6" stroke-width="1.1" stroke-opacity="0.85"/><line x1="402.32" y1="482.44" x2="402.02" y2="529.35" stroke="#f4f0e6" stroke-width="1.1" stroke-opacity="0.85"/><line x1="319.80" y1="486.59" x2="319.89" y2="533.58" stroke="#f4f0e6" stroke-width="1.1" stroke-opacity="0.85"/><line x1="295.97" y1="484.92" x2="296.17" y2="531.88" stroke="#f4f0e6" stroke-width="1.1" stroke-opacity="0.85"/><line x1="164.73" y1="443.68" x2="165.56" y2="489.80" stroke="#f4f0e6" stroke-width="1.1" stroke-opacity="0.85"/><line x1="131.83" y1="405.04" x2="132.82" y2="450.37" stroke="#f4f0e6" stroke-width="1.1" stroke-opacity="0.85"/><line x1="129.36" y1="394.73" x2="130.36" y2="439.84" stroke="#f4f0e6" stroke-width="1.1" stroke-opacity="0.85"/><path d="M340.0 371.0 L340.00 291.00 A210.0 98.0 0 0 1 387.58 293.66 Z" fill="#5B9BD5" stroke="#fbf7ee" stroke-width="1" stroke-opacity="0.9" stroke-linejoin="round"/><path d="M340.0 371.0 L387.58 293.66 A210.0 98.0 0 0 1 436.28 302.15 Z" fill="#ED7D31" stroke="#fbf7ee" stroke-width="1" stroke-opacity="0.9" stroke-linejoin="round"/><path d="M340.0 371.0 L436.28 302.15 A210.0 98.0 0 0 1 547.57 377.60 Z" fill="#A5A5A5" stroke="#fbf7ee" stroke-width="1" stroke-opacity="0.9" stroke-linejoin="round"/><path d="M340.0 371.0 L547.57 377.60 A210.0 98.0 0 0 1 501.25 451.22 Z" fill="#FFC000" stroke="#fbf7ee" stroke-width="1" stroke-opacity="0.9" stroke-linejoin="round"/><path d="M340.0 371.0 L501.25 451.22 A210.0 98.0 0 0 1 402.32 482.44 Z" fill="#4472C4" stroke="#fbf7ee" stroke-width="1" stroke-opacity="0.9" stroke-linejoin="round"/><path d="M340.0 371.0 L402.32 482.44 A210.0 98.0 0 0 1 319.80 486.59 Z" fill="#70AD47" stroke="#fbf7ee" stroke-width="1" stroke-opacity="0.9" stroke-linejoin="round"/><path d="M340.0 371.0 L319.80 486.59 A210.0 98.0 0 0 1 295.97 484.92 Z" fill="#255E91" stroke="#fbf7ee" stroke-width="1" stroke-opacity="0.9" stroke-linejoin="round"/><path d="M340.0 371.0 L295.97 484.92 A210.0 98.0 0 0 1 164.73 443.68 Z" fill="#9E480E" stroke="#fbf7ee" stroke-width="1" stroke-opacity="0.9" stroke-linejoin="round"/><path d="M340.0 371.0 L164.73 443.68 A210.0 98.0 0 0 1 131.83 405.04 Z" fill="#636363" stroke="#fbf7ee" stroke-width="1" stroke-opacity="0.9" stroke-linejoin="round"/><path d="M340.0 371.0 L131.83 405.04 A210.0 98.0 0 0 1 129.36 394.73 Z" fill="#997300" stroke="#fbf7ee" stroke-width="1" stroke-opacity="0.9" stroke-linejoin="round"/><path d="M340.0 371.0 L129.36 394.73 A210.0 98.0 0 0 1 131.45 374.07 Z" fill="#264478" stroke="#fbf7ee" stroke-width="1" stroke-opacity="0.9" stroke-linejoin="round"/><path d="M340.0 371.0 L131.45 374.07 A210.0 98.0 0 0 1 146.53 349.80 Z" fill="#43682B" stroke="#fbf7ee" stroke-width="1" stroke-opacity="0.9" stroke-linejoin="round"/><path d="M340.0 371.0 L146.53 349.80 A210.0 98.0 0 0 1 157.09 340.04 Z" fill="#7CAFDD" stroke="#fbf7ee" stroke-width="1" stroke-opacity="0.9" stroke-linejoin="round"/><path d="M340.0 371.0 L157.09 340.04 A210.0 98.0 0 0 1 216.79 309.30 Z" fill="#F1975A" stroke="#fbf7ee" stroke-width="1" stroke-opacity="0.9" stroke-linejoin="round"/><path d="M340.0 371.0 L216.79 309.30 A210.0 98.0 0 0 1 340.00 291.00 Z" fill="#B7B7B7" stroke="#fbf7ee" stroke-width="1" stroke-opacity="0.9" stroke-linejoin="round"/><circle cx="46.5" cy="222.7" r="4.2" fill="#fff" stroke="#6b6b6b" stroke-width="1.4"/><circle cx="46.5" cy="397.0" r="4.2" fill="#fff" stroke="#6b6b6b" stroke-width="1.4"/><circle cx="46.5" cy="571.2" r="4.2" fill="#fff" stroke="#6b6b6b" stroke-width="1.4"/><circle cx="338.8" cy="222.7" r="4.2" fill="#fff" stroke="#6b6b6b" stroke-width="1.4"/><circle cx="338.8" cy="571.2" r="4.2" fill="#fff" stroke="#6b6b6b" stroke-width="1.4"/><circle cx="631.2" cy="222.7" r="4.2" fill="#fff" stroke="#6b6b6b" stroke-width="1.4"/><circle cx="631.2" cy="397.0" r="4.2" fill="#fff" stroke="#6b6b6b" stroke-width="1.4"/><circle cx="631.2" cy="571.2" r="4.2" fill="#fff" stroke="#6b6b6b" stroke-width="1.4"/></svg>
<div class="t fit" style="transform:scaleX(0.9733);left:317.2px;top:232.12px;font-size:15px;line-height:18.75px;--w:43.8px;color:#6a6a6a;font-weight:400;-webkit-text-stroke:0px;z-index:6;">前年比</div>
<div class="t fit" style="transform:scaleX(1.0052);left:230px;top:266.88px;font-size:9px;line-height:11.25px;--w:38.7px;color:#595959;font-weight:400;-webkit-text-stroke:0.1px;z-index:6;">町田店(F)</div>
<div class="t fit" style="transform:scaleX(0.9413);left:238px;top:281.48px;font-size:9px;line-height:11.25px;--w:23.4px;color:#595959;font-weight:400;-webkit-text-stroke:0.1px;z-index:6;">11.7%</div>
<div class="t fit" style="transform:scaleX(1.0444);left:134.4px;top:305.88px;font-size:9px;line-height:11.25px;--w:37.6px;color:#595959;font-weight:400;-webkit-text-stroke:0.1px;z-index:6;">八王子店</div>
<div class="t fit" style="transform:scaleX(0.9066);left:144px;top:320.48px;font-size:9px;line-height:11.25px;--w:18.6px;color:#595959;font-weight:400;-webkit-text-stroke:0.1px;z-index:6;">7.8%</div>
<div class="t fit" style="transform:scaleX(1.0333);left:111.8px;top:331.38px;font-size:9px;line-height:11.25px;--w:27.9px;color:#595959;font-weight:400;-webkit-text-stroke:0.1px;z-index:6;">立川店</div>
<div class="t fit" style="transform:scaleX(0.892);left:117.7px;top:345.98px;font-size:9px;line-height:11.25px;--w:18.3px;color:#595959;font-weight:400;-webkit-text-stroke:0.1px;z-index:6;">1.7%</div>
<div class="t fit" style="transform:scaleX(1.0361);left:86.3px;top:350.38px;font-size:9px;line-height:11.25px;--w:37.3px;color:#595959;font-weight:400;-webkit-text-stroke:0.1px;z-index:6;">国分寺店</div>
<div class="t fit" style="transform:scaleX(0.9568);left:94.3px;top:364.48px;font-size:9px;line-height:11.25px;--w:22.5px;color:#595959;font-weight:400;-webkit-text-stroke:0.1px;z-index:6;">-4.4%</div>
<div class="t fit" style="transform:scaleX(1.0667);left:366.4px;top:262.28px;font-size:9px;line-height:11.25px;--w:28.8px;color:#595959;font-weight:400;-webkit-text-stroke:0.1px;z-index:6;">新宿店</div>
<div class="t fit" style="transform:scaleX(0.9611);left:369.4px;top:276.68px;font-size:9px;line-height:11.25px;--w:22.6px;color:#595959;font-weight:400;-webkit-text-stroke:0.1px;z-index:6;">-4.6%</div>
<div class="t fit" style="transform:scaleX(1.0667);left:417.9px;top:268.28px;font-size:9px;line-height:11.25px;--w:28.8px;color:#595959;font-weight:400;-webkit-text-stroke:0.1px;z-index:6;">渋谷店</div>
<div class="t fit" style="transform:scaleX(0.9554);left:422.4px;top:283.48px;font-size:9px;line-height:11.25px;--w:19.6px;color:#595959;font-weight:400;-webkit-text-stroke:0.1px;z-index:6;">4.7%</div>
<div class="t fit" style="transform:scaleX(1.0333);left:520.9px;top:316.68px;font-size:9px;line-height:11.25px;--w:27.9px;color:#595959;font-weight:400;-webkit-text-stroke:0.1px;z-index:6;">池袋店</div>
<div class="t fit" style="transform:scaleX(0.9283);left:523px;top:331.38px;font-size:9px;line-height:11.25px;--w:23.7px;color:#595959;font-weight:400;-webkit-text-stroke:0.1px;z-index:6;">17.1%</div>
<div class="t fit" style="transform:scaleX(1.0052);left:84px;top:419.28px;font-size:9px;line-height:11.25px;--w:38.7px;color:#595959;font-weight:400;-webkit-text-stroke:0.1px;z-index:6;">府中店(F)</div>
<div class="t fit" style="transform:scaleX(0.9261);left:94px;top:433.28px;font-size:9px;line-height:11.25px;--w:19px;color:#595959;font-weight:400;-webkit-text-stroke:0.1px;z-index:6;">1.5%</div>
<div class="t fit" style="transform:scaleX(1.0519);left:94.3px;top:436.88px;font-size:9px;line-height:11.25px;--w:28.4px;color:#595959;font-weight:400;-webkit-text-stroke:0.1px;z-index:6;">調布店</div>
<div class="t fit" style="transform:scaleX(0.9611);left:97.2px;top:451.48px;font-size:9px;line-height:11.25px;--w:22.6px;color:#595959;font-weight:400;-webkit-text-stroke:0.1px;z-index:6;">-1.4%</div>
<div class="t fit" style="transform:scaleX(1.0583);left:98.7px;top:466.18px;font-size:9px;line-height:11.25px;--w:38.1px;color:#595959;font-weight:400;-webkit-text-stroke:0.1px;z-index:6;">吉祥寺店</div>
<div class="t fit" style="transform:scaleX(0.9456);left:108px;top:479.68px;font-size:9px;line-height:11.25px;--w:19.4px;color:#595959;font-weight:400;-webkit-text-stroke:0.1px;z-index:6;">6.1%</div>
<div class="t fit" style="transform:scaleX(1.0211);left:166px;top:525.67px;font-size:9px;line-height:11.25px;--w:48.5px;color:#595959;font-weight:400;-webkit-text-stroke:0.1px;z-index:6;">高円寺店(F)</div>
<div class="t fit" style="transform:scaleX(0.9204);left:178.4px;top:539.47px;font-size:9px;line-height:11.25px;--w:23.5px;color:#595959;font-weight:400;-webkit-text-stroke:0.1px;z-index:6;">10.7%</div>
<div class="t fit" style="transform:scaleX(0.9922);left:273.1px;top:544.17px;font-size:9px;line-height:11.25px;--w:38.2px;color:#595959;font-weight:400;-webkit-text-stroke:0.1px;z-index:6;">中野店(F)</div>
<div class="t fit" style="transform:scaleX(0.9261);left:282px;top:558.88px;font-size:9px;line-height:11.25px;--w:19px;color:#595959;font-weight:400;-webkit-text-stroke:0.1px;z-index:6;">1.5%</div>
<div class="t fit" style="transform:scaleX(1.0296);left:354.2px;top:543.67px;font-size:9px;line-height:11.25px;--w:27.8px;color:#595959;font-weight:400;-webkit-text-stroke:0.1px;z-index:6;">神田店</div>
<div class="t fit" style="transform:scaleX(0.931);left:358.8px;top:557.97px;font-size:9px;line-height:11.25px;--w:19.1px;color:#595959;font-weight:400;-webkit-text-stroke:0.1px;z-index:6;">5.4%</div>
<div class="t fit" style="transform:scaleX(1.0444);left:463.3px;top:524.67px;font-size:9px;line-height:11.25px;--w:28.2px;color:#595959;font-weight:400;-webkit-text-stroke:0.1px;z-index:6;">上野店</div>
<div class="t fit" style="transform:scaleX(0.931);left:467.9px;top:539.67px;font-size:9px;line-height:11.25px;--w:19.1px;color:#595959;font-weight:400;-webkit-text-stroke:0.1px;z-index:6;">7.9%</div>
<div class="t fit" style="transform:scaleX(1.0078);left:548.8px;top:454.98px;font-size:9px;line-height:11.25px;--w:38.8px;color:#595959;font-weight:400;-webkit-text-stroke:0.1px;z-index:6;">新橋店(F)</div>
<div class="t fit" style="transform:scaleX(0.9735);left:555.8px;top:469.18px;font-size:9px;line-height:11.25px;--w:24.2px;color:#595959;font-weight:400;-webkit-text-stroke:0.1px;z-index:6;">11.7%</div>
<svg class="ov" width="1024" height="776" style="z-index:20;pointer-events:none" fill="none" stroke-linecap="round" stroke-linejoin="round"><g stroke="#6cb48a" stroke-width="1.1"><rect x="17.5" y="14.2" width="8.5" height="11.6" rx="0.8"/><path d="M17.5 17.8 H26 M17.5 21.5 H26"/><rect x="13.5" y="16.5" width="7.5" height="7.5" fill="#6cb48a" stroke="none"/><path d="M15.2 18.2 L19.3 22.4 M19.3 18.2 L15.2 22.4" stroke="#187c42" stroke-width="1.1"/><rect x="40" y="14.2" width="11.5" height="11.6" rx="0.8"/><path d="M42.5 14.2 V18.5 H49 V14.2 M42.5 25.8 V21.5 H49 V25.8"/><path d="M64 15.5 V19.5 H68 M64.3 19.3 C66 15.5 70.5 14.5 72.8 17.5 C75 20.5 72.5 24 69 25.8"/><path d="M80.5 18.6 L82.6 20.6 L84.7 18.6"/><path d="M105 15.5 V19.5 H101 M104.7 19.3 C103 15.5 98.5 14.5 96.2 17.5 C94 20.5 96.5 24 100 25.8"/><path d="M111 18.6 L113.1 20.6 L115.2 18.6"/><path d="M128.3 17.2 H132.8 M128.8 19.5 L130.5 21.5 L132.3 19.5"/></g><g stroke="#5aa377" stroke-width="1.2"><circle cx="404.5" cy="17.8" r="3.8"/><path d="M401.8 20.6 L398.2 24.2"/></g><rect x="832" y="15" width="6" height="9" fill="#3f9a63" stroke="none" opacity="0.9"/><rect x="838" y="15" width="6" height="9" fill="#4aa06c" stroke="none" opacity="0.9"/><rect x="844" y="15" width="5" height="9" fill="#3e9862" stroke="none" opacity="0.9"/><rect x="853" y="15" width="6" height="9" fill="#45a068" stroke="none" opacity="0.9"/><rect x="859" y="15" width="5" height="9" fill="#3f9a63" stroke="none" opacity="0.9"/><rect x="864" y="15" width="6" height="9" fill="#46a069" stroke="none" opacity="0.9"/><rect x="878" y="12" width="6" height="11" fill="#8fc2a2" stroke="none"/><rect x="882" y="9" width="6" height="8" fill="#e8e0ea" stroke="none"/><rect x="884" y="17" width="8" height="10" fill="#5b4a5e" stroke="none"/><rect x="890" y="14" width="8" height="8" fill="#2e3a3d" stroke="none"/><rect x="888" y="7" width="6" height="6" fill="#4d7a5f" stroke="none"/><rect x="878" y="22" width="6" height="6" fill="#7ea98e" stroke="none"/><g stroke="#74bb8f" stroke-width="1"><path d="M923.5 20 H932.5"/><rect x="962" y="16" width="8" height="8"/><path d="M1000 16 L1008 24 M1008 16 L1000 24"/></g><g stroke="#ffffff" stroke-width="1.1"><path d="M963 49 V56 H972 V52"/><path d="M966 53 C966 49 968.5 47.5 972 47.5 M969.8 45.3 L972.2 47.5 L969.8 49.8"/><path d="M1004 49.5 L1006.2 51.7 L1008.4 49.5"/></g><path d="M143 73.8 L145.3 76 L147.6 73.8" stroke="#404040" stroke-width="1.1"/><g><path d="M21.5 92 L26.5 90 L30 95 L25 97 Z" fill="none" stroke="#505050" stroke-width="1"/><path d="M24 99.5 L33 94.5 L34 96.5 L25.5 101.8 Z" fill="#3c7fc4" stroke="none"/><path d="M22.5 101 L24.5 102.5" stroke="#3c7fc4" stroke-width="1.6"/></g><g stroke="#505050" stroke-width="0.9"><path d="M23 112 V124 H32 V114 L30 112 Z"/><path d="M26 119 H29 V117"/></g><path d="M21 113.5 C21 110.5 23 110 26 110.5 M24.3 108.8 L26.2 110.5 L24.3 112.3" stroke="#3c7fc4" stroke-width="1"/><g stroke="#4a4a4a" stroke-width="0.95"><rect x="169.5" y="76" width="12" height="9" fill="#cfe3f5" stroke="#4a7fb0"/><path d="M173 83 L175.5 77.5 L178 83 M174 81 H177" stroke="#2f6fb0"/><rect x="184" y="76" width="12.5" height="9" fill="#cfe3f5" stroke="#4a7fb0"/><path d="M187.5 78.5 L192 80.5 L187.5 82.5" stroke="#2f6fb0"/><path d="M200.5 75.5 L212.5 87.5"/><path d="M168.5 91 L179.5 102 M176 102 H180 V98"/><rect x="184" y="92.5" width="13" height="9"/><ellipse cx="206.5" cy="97" rx="6.5" ry="4.5"/><rect x="168.5" y="108.5" width="13" height="9" rx="2.5"/><path d="M184.5 118 L190.5 107.5 L196.5 118 Z"/><path d="M200.5 107.5 H205 V117.5 H212.5"/></g><g stroke="#a0a0a0" stroke-width="1"><path d="M218.5 80.5 L221 78.5 L223.5 80.5"/></g><g stroke="#404040" stroke-width="1.1"><path d="M218.8 96 L221 98 L223.2 96"/><path d="M218.8 111 H223.2 M218.8 113.5 L221 115.5 L223.2 113.5"/></g><g stroke="#ececec" stroke-width="1"><path d="M215.5 88.5 H226.5 M215.5 104.5 H226.5"/></g><rect x="237" y="70" width="15" height="14" fill="#6fb0ea" stroke="#3d7cc0" stroke-width="1"/><circle cx="252.5" cy="85.3" r="7.3" fill="#ffffff" stroke="#606060" stroke-width="1.2"/><path d="M256 113.8 L258 115.8 L260 113.8" stroke="#404040" stroke-width="1.1"/><g stroke="#b0b0b0" stroke-width="1"><path d="M417.8 80.5 L420.5 78.5 L423.2 80.5"/></g><g stroke="#404040" stroke-width="1.1"><path d="M418 96 L420.5 98 L423 96"/><path d="M418 110.5 H423 M418 113 L420.5 115 L423 113"/></g><g stroke="#ececec" stroke-width="1"><path d="M415.5 88 H426 M415.5 104 H426"/></g><path d="M436 76.5 L440 72 L444.5 76.5 L440 80 Z" stroke="#505050" stroke-width="1"/><path d="M444 74 C446 75 446 77 445 78.5" stroke="#505050" stroke-width="0.9"/><rect x="434" y="80" width="12.8" height="2.6" fill="#e07b39" stroke="none"/><path d="M519.5 75.3 L521.6 77.3 L523.7 75.3" stroke="#404040" stroke-width="1.1"/><path d="M435 98.5 V91.5 H441" stroke="#505050" stroke-width="1"/><path d="M438.5 98 L445 91.5 L446.5 93 L440 99.5 Z" fill="#4f88c9" stroke="none"/><rect x="434" y="100.3" width="12.8" height="2.6" fill="#4f88c9" stroke="none"/><path d="M500 96 L502.1 98 L504.2 96" stroke="#404040" stroke-width="1.1"/><path d="M434.5 119 L439.5 113 L446 113 L446 116 L441 122 L434.5 122 Z" fill="#ffffff" stroke="#505050" stroke-width="1"/><path d="M434.5 119 H441 L446 113 M441 119 V122" stroke="#505050" stroke-width="0.9"/><path d="M500 116.5 L502.1 118.5 L504.2 116.5" stroke="#404040" stroke-width="1.1"/><g stroke="#606060" stroke-width="0.9"><path d="M525.7 138.6 V132.6 H531.7"/><path d="M527.2 134.1 L531.7 138.6 M531.7 135.6 V138.6 H528.7"/></g><g stroke="#606060" stroke-width="0.9"><path d="M624 138.6 V132.6 H630"/><path d="M625.5 134.1 L630 138.6 M630 135.6 V138.6 H627"/></g><g stroke="#606060" stroke-width="0.9"><path d="M943 137.5 V131.5 H949"/><path d="M944.5 133.0 L949 137.5 M949 134.5 V137.5 H946"/></g><path d="M556.5 93.5 L563.5 71.5 L570.5 93.5 M559 86 H568" stroke="#404040" stroke-width="1.4"/><path d="M568 91 L578 78 L580 79.5 L571 92" fill="#ffffff" stroke="#404040" stroke-width="1"/><path d="M566 91.5 C568 88 571.5 89 571.5 91.5 C571 94.5 567 95 564.5 94.5 Z" fill="#4a90d9" stroke="none"/><path d="M578.5 113 L580.5 115 L582.5 113" stroke="#404040" stroke-width="1.1"/><path d="M596 79 L599.8 70 L603.6 79 M597.3 76 H602.3" stroke="#404040" stroke-width="1"/><rect x="593" y="79.5" width="13.4" height="2.2" fill="#262626" stroke="none"/><path d="M612.5 75.5 L614.7 77.5 L616.9 75.5" stroke="#404040" stroke-width="1.1"/><path d="M595.5 100 L599.8 90 L604.1 100 Z M597.5 96 H602" fill="#d0d0d0" stroke="#404040" stroke-width="1"/><rect x="593" y="100.3" width="13.4" height="2.2" fill="#262626" stroke="none"/><path d="M612.5 96 L614.7 98 L616.9 96" stroke="#404040" stroke-width="1.1"/><path d="M594.5 122 L599.8 111.5 L605.1 122 H602.3 L601.2 119.5 H598.4 L597.3 122 Z" fill="#4ea0e0" stroke="#2d78b8" stroke-width="0.9"/><path d="M612.5 117 L614.7 119 L616.9 117" stroke="#404040" stroke-width="1.1"/><g stroke="#606060" stroke-width="1"><path d="M664 90 H651.5 V71.5 H673.5 V83"/><path d="M652 87 L658 80.5 L662.5 84.5 L665.5 82 L669 84.5"/><circle cx="669.5" cy="75.5" r="1.2" fill="#606060"/></g><rect x="659.5" y="84" width="17" height="10.5" fill="#e6f1fa" stroke="#4a86b8" stroke-width="1"/><path d="M663 88 H673 M663 91 H673" stroke="#4a86b8" stroke-width="0.9"/><g stroke="#c4c4c4" stroke-width="1"><rect x="702.5" y="70.5" width="8" height="8" fill="#d6d6d6"/><path d="M712.5 74 H714.5 V82 H706 V80.5"/><rect x="702.5" y="90" width="8" height="8" fill="#d6d6d6"/><rect x="706" y="94" width="8.5" height="8" fill="#ffffff"/><path d="M775 76 L777.2 78 L779.4 76 M775 95.5 L777.2 97.5 L779.4 95.5"/></g><rect x="706" y="110" width="8" height="7" fill="#f9d27c" stroke="#d08b2c" stroke-width="0.9"/><path d="M703.5 114.5 V123.5 H712.5" stroke="#404040" stroke-width="1"/><path d="M710 116 L714.5 124 L715.5 121 L718 121 Z" fill="#262626" stroke="#ffffff" stroke-width="0.5"/><g stroke="#404040" stroke-width="1.1"><path d="M824.5 70.5 V83.5"/><rect x="826" y="72" width="7" height="3.5"/><rect x="826" y="77" width="11" height="3.5"/><path d="M842.5 75.5 L844.5 77.5 L846.5 75.5"/></g><path d="M829 82.5 H834" stroke="#4a86b8" stroke-width="0.9"/><g stroke="#c4c4c4" stroke-width="1" stroke-dasharray="1.5 1.2"><rect x="824" y="91" width="12" height="11"/></g><g stroke="#b8b8b8" stroke-width="1"><rect x="827" y="94" width="7" height="5"/><path d="M842.5 96 L844.5 98 L846.5 96"/><path d="M824.5 123 H837 V113 Z"/><path d="M826 114 C828 111 831 111 833 112 M831.5 110.5 L833.3 112 L831.5 113.6"/><path d="M842.5 116.5 L844.5 118.5 L846.5 116.5"/></g><g stroke="#b4b4b4" stroke-width="1"><path d="M868.5 73.5 V90.5 M866.5 75.5 L868.5 73.5 L870.5 75.5 M866.5 88.5 L868.5 90.5 L870.5 88.5"/><rect x="873.5" y="74" width="6" height="16"/><path d="M868 106.5 H880 M870 104.5 L868 106.5 L870 108.5 M878 104.5 L880 106.5 L878 108.5"/><rect x="868" y="98.5" width="12" height="5"/><path d="M938 76 L939.5 74.5 L941 76 M938 87 L939.5 88.5 L941 87 M938 101.5 L939.5 100 L941 101.5 M938 112.5 L939.5 114 L941 112.5"/></g><path d="M1001 131 L1005 135 L1009 131" stroke="#404040" stroke-width="1.2"/><path d="M77 161.8 L80 164.8 L83 161.8" stroke="#404040" stroke-width="1.3"/><g fill="#404040" stroke="none"><circle cx="96.3" cy="159.5" r="0.9"/><circle cx="96.3" cy="163.5" r="0.9"/><circle cx="96.3" cy="167.5" r="0.9"/></g><path d="M111 159.5 L119 167.5 M119 159.5 L111 167.5" stroke="#c8c8c8" stroke-width="1"/><path d="M129 163.5 L133 167.2 L140.5 159.5" stroke="#c8c8c8" stroke-width="1"/><path d="M1005.5 161 L1009 164.5 L1012.5 161" stroke="#a0a0a0" stroke-width="1"/><path d="M964.5 199 L971 205.5 L977.5 199" stroke="#606060" stroke-width="1"/><path d="M999 198 L1008.5 207.5 M1008.5 198 L999 207.5" stroke="#606060" stroke-width="1"/><path d="M881.5 226.5 L884.6 229.4 L887.7 226.5" stroke="#5a9fd4" stroke-width="1.1"/><g stroke="#555555" stroke-width="1.25"><path d="M812.8 255.8 L819.8 248.8 L826.8 255.8 L819.8 262.8 Z"/><circle cx="817.8" cy="247.3" r="1.6"/><path d="M817.8 248.9 V252.5"/></g><path d="M825.5 251.5 C828.5 252.5 830.5 255 830 261 C828.5 259 827 257.5 826 256.5 Z" fill="#505050" stroke="none"/><g stroke="#555555" stroke-width="1.25"><path d="M847.6 253 L855.6 246.5 L863.6 253 L860.6 260.8 H850.6 Z"/><path d="M850.6 260.8 L850 263 H861.2 L860.6 260.8" stroke-width="1"/></g><g stroke="#666666" stroke-width="1"><path d="M884.5 248.3 H896 M884.5 246.6 V250 M896 246.6 V250"/><path d="M881.3 251 V262.6 M880.2 251 H882.4 M880.2 262.6 H882.4"/></g><rect x="885" y="251" width="11" height="11.6" fill="#666666" stroke="none"/><g stroke="#ffffff" stroke-width="0.8"><path d="M887.3 256.8 H893.7 M890.5 253.6 V260"/><path d="M888.3 255.8 L887.3 256.8 L888.3 257.8 M892.7 255.8 L893.7 256.8 L892.7 257.8 M889.5 254.6 L890.5 253.6 L891.5 254.6 M889.5 259 L890.5 260 L891.5 259"/></g><rect x="909.6" y="242.8" width="24.7" height="24.6" rx="3" fill="#ffffff" stroke="#7a7a7a" stroke-width="1"/><rect x="914.4" y="251" width="4.2" height="11.6" fill="#217346" stroke="#1a5c38" stroke-width="0.5"/><rect x="920" y="246.2" width="4.2" height="16.4" fill="#217346" stroke="#1a5c38" stroke-width="0.5"/><rect x="925.4" y="249" width="4.4" height="13.6" fill="#217346" stroke="#1a5c38" stroke-width="0.5"/><path d="M914.5 279.2 L921 273.5 L927.5 279.2" fill="#f0f0f0" stroke="#d9d9d9" stroke-width="1"/><path d="M813.5 284.5 L816.5 287.5 L819.5 284.5" stroke="#404040" stroke-width="1.2"/><path d="M813.5 612.5 L816.5 615.5 L819.5 612.5" stroke="#404040" stroke-width="1.2"/><path d="M1001.5 292 L1005 288 L1008.5 292 Z" fill="#6e6e6e" stroke="none"/><path d="M1001.5 733 L1005 737 L1008.5 733 Z" fill="#6e6e6e" stroke="none"/><path d="M834.8 361.3 L837 363.40000000000003 L840.6 359.1" stroke="#ffffff" stroke-width="1.3"/><path d="M834.8 401.8 L837 403.90000000000003 L840.6 399.6" stroke="#ffffff" stroke-width="1.3"/><path d="M834.8 421.59999999999997 L837 423.7 L840.6 419.4" stroke="#ffffff" stroke-width="1.3"/><path d="M987.5 463 L989.5 465 L991.5 463" stroke="#404040" stroke-width="1.1"/><path d="M974 651.5 L976 653.5 L978 651.5" stroke="#404040" stroke-width="1.1"/><circle cx="991.5" cy="648.6" r="4.5" stroke="#3b8bd0" stroke-width="1" fill="#ffffff"/><path d="M991.5 648.1 V651.1" stroke="#3b8bd0" stroke-width="1.1"/><circle cx="991.5" cy="646.4" r="0.6" fill="#3b8bd0" stroke="none"/><circle cx="907.2" cy="693.5" r="4.5" stroke="#3b8bd0" stroke-width="1" fill="#ffffff"/><path d="M907.2 693.0 V696.0" stroke="#3b8bd0" stroke-width="1.1"/><circle cx="907.2" cy="691.3" r="0.6" fill="#3b8bd0" stroke="none"/><g stroke="#a8a8a8" stroke-width="1.1"><path d="M28 741 L25 744.5 L28 748"/><path d="M51 741 L54 744.5 L51 748"/></g><path d="M380.5 743.5 H390.5 M385.5 738.5 V748.5" stroke="#404040" stroke-width="1"/><g fill="#505050" stroke="none"><circle cx="480" cy="740" r="0.9"/><circle cx="480" cy="743.7" r="0.9"/><circle cx="480" cy="747.4" r="0.9"/><path d="M502 740.5 L497.5 744.3 L502 748 Z"/><path d="M772 740.5 L776.5 744.3 L772 748 Z"/></g><g stroke="#404040" stroke-width="1"><circle cx="67.3" cy="762.6" r="1.4"/><path d="M63.8 765.2 Q67.3 764.3 71.2 765.2 M66.2 765 L64.8 771 M68.6 765 L69.6 768.2"/><path d="M71 768 L74.3 771.3 M74.3 768 L71 771.3"/></g><g stroke="#404040" stroke-width="0.9"><rect x="781" y="761" width="10.4" height="10"/><path d="M781 764.3 H791.4 M781 767.6 H791.4 M784.5 761 V771 M788 761 V771"/></g><g stroke="#505050" stroke-width="0.9"><rect x="813" y="761" width="11.4" height="10"/><rect x="816" y="763" width="5.4" height="6"/><path d="M817.5 765 H820 M817.5 767 H820"/></g><g stroke="#505050" stroke-width="0.9"><rect x="844" y="761" width="12" height="10"/><path d="M848 761 V765 H852 V761"/></g><path d="M870.5 766 H876" stroke="#505050" stroke-width="1"/><path d="M964.5 766 H970.5 M967.5 763 V769" stroke="#505050" stroke-width="1"/></svg>
<script>
(function(){var els=document.querySelectorAll('.fit');
for(var i=0;i<els.length;i++){els[i].style.transform='none';}
for(var i=0;i<els.length;i++){var e=els[i];
  var tw=parseFloat(e.style.getPropertyValue('--w'));
  var nw=e.getBoundingClientRect().width;
  if(nw>0&&tw>0){e.style.transform='scaleX('+(tw/nw).toFixed(4)+')';}
}})();
</script>
</body></html>
